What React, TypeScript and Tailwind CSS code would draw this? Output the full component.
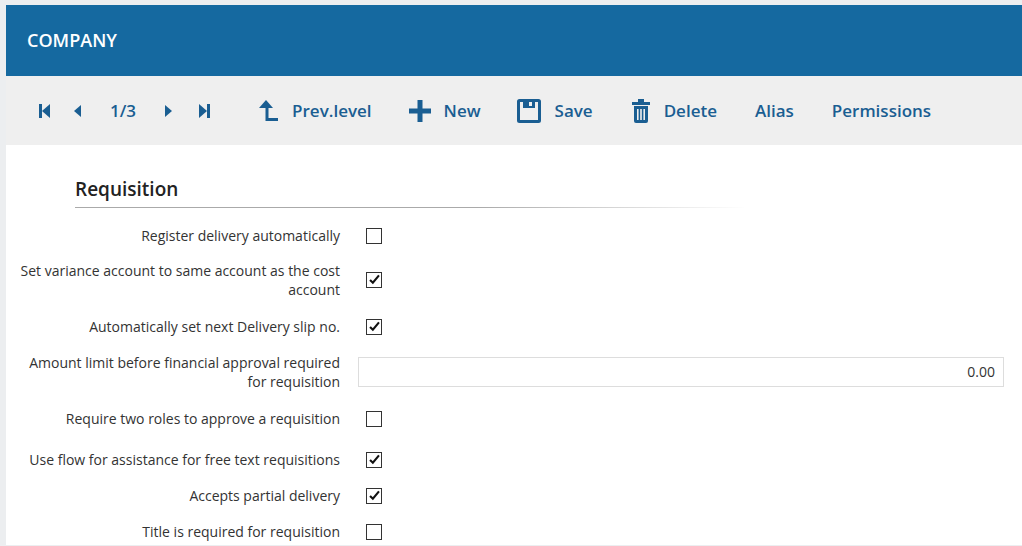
import React from "react";

const C = "#1a5e92";

function Check({ on }: { on: boolean }) {
  return (
    <div className="w-[16px] h-[16px] border border-[#333] bg-white flex items-center justify-center">
      {on && (
        <svg width="13" height="13" viewBox="0 0 16 16">
          <path d="M2.5 8.5 L6 12 L13.5 3" fill="none" stroke="#111" strokeWidth="2.6" />
        </svg>
      )}
    </div>
  );
}

const rows: { label: React.ReactNode; on?: boolean; input?: boolean; h: string }[] = [
  { label: "Register delivery automatically", on: false, h: "h-[36px]" },
  { label: <>Set variance account to same account as the cost<br />account</>, on: true, h: "h-[52px]" },
  { label: "Automatically set next Delivery slip no.", on: true, h: "h-[42px]" },
  { label: <>Amount limit before financial approval required<br />for requisition</>, input: true, h: "h-[48px]" },
  { label: "Require two roles to approve a requisition", on: false, h: "h-[46px]" },
  { label: "Use flow for assistance for free text requisitions", on: true, h: "h-[36px]" },
  { label: "Accepts partial delivery", on: true, h: "h-[36px]" },
  { label: "Title is required for requisition", on: false, h: "h-[36px]" },
];

export default function App() {
  return (
    <div className="w-[1022px] h-[546px] overflow-hidden bg-[#eceef0] pl-[6px] pt-[5px]" style={{ fontFamily: '"Open Sans", sans-serif' }}>
      <div className="h-[71px] bg-[#1569a0] flex items-center pl-[21px] text-white text-[18px] font-semibold">COMPANY</div>
      <div className="h-[69px] bg-[#efefef] flex items-center pl-[32px] text-[17px] font-semibold" style={{ color: C }}>
        <svg width="14" height="16" viewBox="0 0 14 16" fill={C}><rect x="1" y="1" width="3" height="14" /><path d="M4 8 L12 1 V15 Z" /></svg>
        <svg className="ml-[20px]" width="10" height="16" viewBox="0 0 10 16" fill={C}><path d="M9 2 V14 L2 8 Z" /></svg>
        <span className="ml-[28px]">1/3</span>
        <svg className="ml-[28px]" width="10" height="16" viewBox="0 0 10 16" fill={C}><path d="M1 2 V14 L8 8 Z" /></svg>
        <svg className="ml-[24px]" width="14" height="16" viewBox="0 0 14 16" fill={C}><path d="M1 1 L9 8 L1 15 Z" /><rect x="9" y="1" width="3" height="14" /></svg>
        <svg className="ml-[46px]" width="22" height="22" viewBox="0 0 22 22" fill={C}><path d="M8 0 L15 8 H10.5 V18 H20 V21 H7.5 V8 H1 Z" /></svg>
        <span className="ml-[12px]">Prev.level</span>
        <svg className="ml-[36px]" width="24" height="24" viewBox="0 0 24 24" fill={C}><rect x="9.5" y="1" width="5" height="22" /><rect x="1" y="9.5" width="22" height="5" /></svg>
        <span className="ml-[12px]">New</span>
        <svg className="ml-[36px]" width="24" height="24" viewBox="0 0 24 24"><rect x="1.5" y="1.5" width="21" height="21" rx="1" fill="none" stroke={C} strokeWidth="3" /><rect x="6" y="2" width="12" height="7" fill={C} /><rect x="12" y="3" width="3" height="4" fill="#efefef" /></svg>
        <span className="ml-[14px]">Save</span>
        <svg className="ml-[38px]" width="20" height="24" viewBox="0 0 20 24" fill={C}><rect x="7" y="0" width="6" height="3" /><rect x="1" y="3" width="18" height="3" /><path d="M3 7 H17 V22 Q17 24 15 24 H5 Q3 24 3 22 Z" /><rect x="6" y="10" width="1.6" height="11" fill="#efefef" /><rect x="9.2" y="10" width="1.6" height="11" fill="#efefef" /><rect x="12.4" y="10" width="1.6" height="11" fill="#efefef" /></svg>
        <span className="ml-[13px]">Delete</span>
        <span className="ml-[38px]">Alias</span>
        <span className="ml-[38px]">Permissions</span>
      </div>
      <div className="bg-white h-[400px] pt-[30px]">
        <div className="ml-[69px] w-[670px] text-[19px] font-semibold text-[#222] pb-[3px] border-b border-[#c8c8c8]" style={{ borderImage: "linear-gradient(to right,#aaa,#aaa 60%,#fff) 1" }}>Requisition</div>
        <div className="pt-[10px]">
          {rows.map((r, i) => (
            <div key={i} className={`flex items-center ${r.h}`}>
              <div className="w-[334px] text-right text-[14px] leading-[19px] text-[#333]">{r.label}</div>
              {r.input ? (
                <div className="ml-[18px] w-[646px] h-[30px] border border-[#ddd] flex items-center justify-end pr-[8px] text-[14px] text-[#333]">0.00</div>
              ) : (
                <div className="ml-[26px]"><Check on={!!r.on} /></div>
              )}
            </div>
          ))}
        </div>
      </div>
    </div>
  );
}
